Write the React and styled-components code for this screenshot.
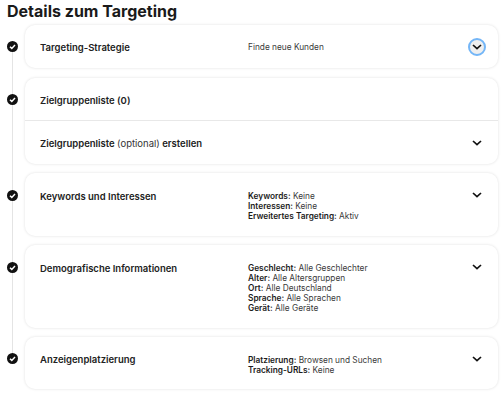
import React from 'react';
import styled, { createGlobalStyle } from 'styled-components';

const GlobalStyle = createGlobalStyle`
  html, body {
    margin: 0;
    padding: 0;
    background: #fff;
  }
  body {
    font-family: Inter, "Liberation Sans", sans-serif;
    color: #1f1f1f;
  }
`;

const Page = styled.div`
  width: 503px;
  height: 402px;
  overflow: hidden;
  box-sizing: border-box;
  padding: 0 5px 0 7px;
`;

const Title = styled.h1`
  margin: 0;
  height: 25px;
  font-size: 16px;
  line-height: 22px;
  font-weight: 700;
  color: #1a1a1a;
`;

const Steps = styled.div`
  display: flex;
  flex-direction: column;
`;

const Step = styled.div`
  position: relative;
  display: flex;
  align-items: flex-start;
  margin-bottom: ${p => p.$gap}px;

  &::before {
    content: '';
    display: ${p => (p.$last ? 'none' : 'block')};
    position: absolute;
    left: 5px;
    top: 21px;
    bottom: ${p => -p.$gap - 21}px;
    width: 1px;
    background: #e4e4e4;
  }
`;

const Rail = styled.div`
  position: relative;
  z-index: 1;
  display: flex;
  flex: 0 0 18px;
  height: 11px;
  margin-top: ${p => p.$top}px;
  color: #111;
`;

const Card = styled.div`
  flex: 1;
  box-sizing: border-box;
  background: #fff;
  border-radius: 10px;
  box-shadow: 0 0 3px rgba(0, 0, 0, 0.13);
`;

const Section = styled.div`
  display: grid;
  grid-template-columns: 208px 1fr 20px;
  box-sizing: border-box;
  height: ${p => p.$height}px;
  padding: ${p => p.$top}px 11px 0 15px;

  & + & {
    border-top: 1px solid #e8e8e8;
  }
`;

const Label = styled.div`
  margin-top: ${p => (p.$flush ? 0 : 1)}px;
  font-size: 9.5px;
  line-height: 11px;
  font-weight: 600;
  color: #222;
`;

const Optional = styled.span`
  font-weight: 400;
  color: #333;
`;

const Value = styled.div`
  margin-top: 0.5px;
  font-size: 8.3px;
  line-height: 10.2px;
  color: #3a3a3a;

  b {
    font-weight: 600;
    color: #1c1c1c;
  }
`;

const ChevronButton = styled.div`
  display: flex;
  align-items: center;
  justify-content: center;
  box-sizing: border-box;
  width: 18px;
  height: 18px;
  margin: ${p => p.$offset}px 0 0 1px;
  border-radius: 50%;
  color: #111;
  background: ${p => (p.$focused ? '#efefef' : 'transparent')};
  border: 2px solid ${p => (p.$focused ? '#74b6f7' : 'transparent')};
`;

const CheckIcon = () => (
  <svg width="11" height="11" viewBox="0 0 11 11">
    <circle cx="5.5" cy="5.5" r="5.5" fill="currentColor" />
    <path d="M3 5.7 4.8 7.4 8 4" fill="none" stroke="#fff" strokeWidth="1.5" />
  </svg>
);

const Chevron = () => (
  <svg width="10" height="6" viewBox="0 0 10 6">
    <path d="M1 1 5 4.7 9 1" fill="none" stroke="currentColor" strokeWidth="1.7" />
  </svg>
);

const Line = ({ name, value }) => (
  <div>
    <b>{name}:</b> {value}
  </div>
);

export default function App() {
  return (
    <Page>
      <GlobalStyle />
      <Title>Details zum Targeting</Title>
      <Steps>
        <Step $gap={10}>
          <Rail $top={16}><CheckIcon /></Rail>
          <Card>
            <Section $height={43} $top={16}>
              <Label>Targeting-Strategie</Label>
              <Value>Finde neue Kunden</Value>
              <ChevronButton $focused $offset={-3}><Chevron /></ChevronButton>
            </Section>
          </Card>
        </Step>

        <Step $gap={9}>
          <Rail $top={16}><CheckIcon /></Rail>
          <Card>
            <Section $height={42} $top={16}>
              <Label>Zielgruppenliste (0)</Label>
            </Section>
            <Section $height={44} $top={17}>
              <Label $flush>Zielgruppenliste <Optional>(optional)</Optional> erstellen</Label>
              <span />
              <ChevronButton $offset={-4}><Chevron /></ChevronButton>
            </Section>
          </Card>
        </Step>

        <Step $gap={9}>
          <Rail $top={17}><CheckIcon /></Rail>
          <Card>
            <Section $height={63} $top={17}>
              <Label>Keywords und Interessen</Label>
              <Value>
                <Line name="Keywords" value="Keine" />
                <Line name="Interessen" value="Keine" />
                <Line name="Erweitertes Targeting" value="Aktiv" />
              </Value>
              <ChevronButton $offset={-4}><Chevron /></ChevronButton>
            </Section>
          </Card>
        </Step>

        <Step $gap={9}>
          <Rail $top={17}><CheckIcon /></Rail>
          <Card>
            <Section $height={83} $top={17}>
              <Label>Demografische Informationen</Label>
              <Value>
                <Line name="Geschlecht" value="Alle Geschlechter" />
                <Line name="Alter" value="Alle Altersgruppen" />
                <Line name="Ort" value="Alle Deutschland" />
                <Line name="Sprache" value="Alle Sprachen" />
                <Line name="Gerät" value="Alle Geräte" />
              </Value>
              <ChevronButton $offset={-4}><Chevron /></ChevronButton>
            </Section>
          </Card>
        </Step>

        <Step $gap={0} $last>
          <Rail $top={16}><CheckIcon /></Rail>
          <Card>
            <Section $height={52} $top={17}>
              <Label $flush>Anzeigenplatzierung</Label>
              <Value>
                <Line name="Platzierung" value="Browsen und Suchen" />
                <Line name="Tracking-URLs" value="Keine" />
              </Value>
              <ChevronButton $offset={-4}><Chevron /></ChevronButton>
            </Section>
          </Card>
        </Step>
      </Steps>
    </Page>
  );
}
